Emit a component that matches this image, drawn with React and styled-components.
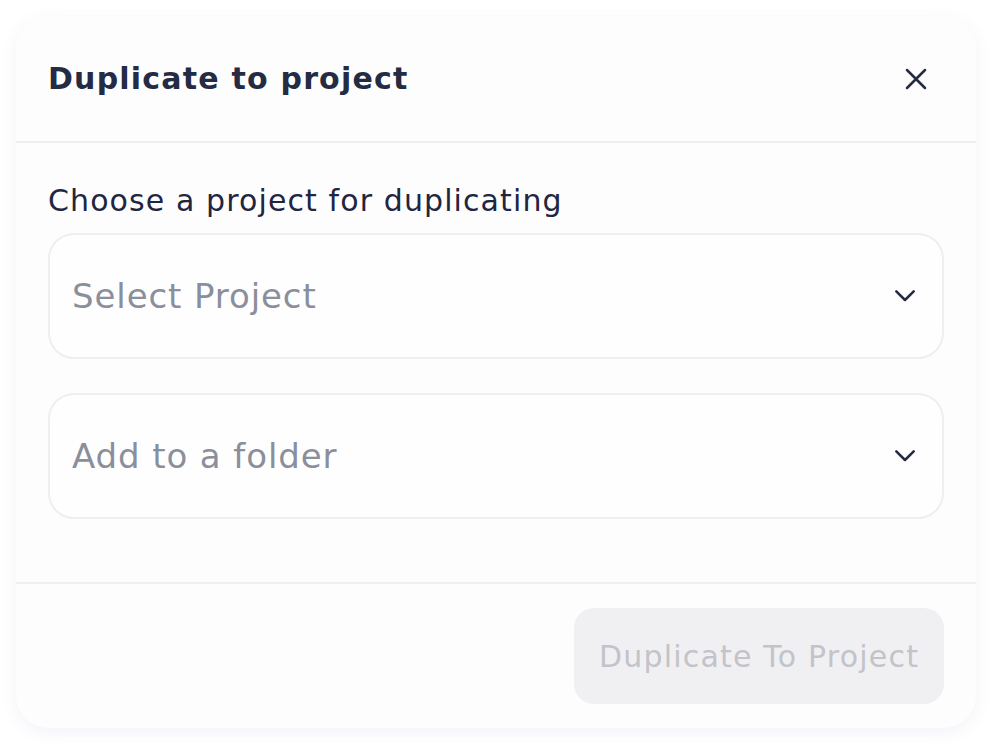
import React from 'react';
import styled, { createGlobalStyle } from 'styled-components';

const GlobalStyle = createGlobalStyle`
  html, body {
    margin: 0;
    padding: 0;
    background: #ffffff;
    font-family: "DejaVu Sans", Inter, sans-serif;
  }
  * { box-sizing: border-box; }
`;

const Page = styled.div`
  padding: 16px;
  width: 992px;
  height: 744px;
`;

const Modal = styled.div`
  width: 960px;
  height: 712px;
  background: #fdfdfe;
  border-radius: 32px;
  box-shadow: 0 4px 16px rgba(70, 80, 160, 0.07);
  display: flex;
  flex-direction: column;
`;

const Header = styled.div`
  height: 127px;
  padding: 0 48px 0 32px;
  display: flex;
  align-items: center;
  justify-content: space-between;
  border-bottom: 2px solid #efeff2;
`;

const Title = styled.h2`
  margin: 0;
  font-size: 30px;
  font-weight: 700;
  letter-spacing: 1.2px;
  color: #242b42;
`;

const CloseButton = styled.button`
  border: 0;
  background: none;
  padding: 0;
  width: 24px;
  height: 24px;
  display: flex;
  align-items: center;
  justify-content: center;
  color: #242b42;
  cursor: pointer;
`;

const Body = styled.div`
  flex: 1;
  padding: 40px 32px 0 32px;
  display: flex;
  flex-direction: column;
  border-bottom: 2px solid #efeff2;
`;

const Label = styled.div`
  font-size: 30px;
  letter-spacing: 1.1px;
  color: #1f2640;
  line-height: 36px;
  margin-bottom: 14px;
`;

const Field = styled.div`
  height: 126px;
  border: 2px solid #efeff2;
  border-radius: 26px;
  background: #fefefe;
  display: flex;
  align-items: center;
  justify-content: space-between;
  padding: 0 25px 0 22px;
  margin-bottom: ${p => p.$gap || 0}px;
`;

const Placeholder = styled.span`
  font-size: 34px;
  letter-spacing: 0.9px;
  color: #8b8f9c;
`;

const Footer = styled.div`
  height: 144px;
  padding: 24px 32px 0 32px;
  display: flex;
  justify-content: flex-end;
  align-items: flex-start;
`;

const PrimaryButton = styled.button`
  width: 370px;
  height: 96px;
  border: 0;
  border-radius: 20px;
  background: #f0f0f3;
  color: #c3c3c9;
  font-family: inherit;
  font-size: 30px;
  letter-spacing: 1.2px;
  cursor: default;
`;

const Chevron = () => (
  <svg width="24" height="24" viewBox="0 0 24 24" fill="none" stroke="#242b42" strokeWidth="2.5" strokeLinecap="round" strokeLinejoin="round">
    <path d="M3.3 7.3L12 16l8.7-8.7" />
  </svg>
);

const CloseIcon = () => (
  <svg width="24" height="24" viewBox="0 0 24 24" fill="none" stroke="#242b42" strokeWidth="2.5" strokeLinecap="round">
    <path d="M3 3l18 18M21 3L3 21" />
  </svg>
);

export default function App() {
  return (
    <Page>
      <GlobalStyle />
      <Modal>
        <Header>
          <Title>Duplicate to project</Title>
          <CloseButton aria-label="Close"><CloseIcon /></CloseButton>
        </Header>
        <Body>
          <Label>Choose a project for duplicating</Label>
          <Field $gap={34}>
            <Placeholder>Select Project</Placeholder>
            <Chevron />
          </Field>
          <Field>
            <Placeholder>Add to a folder</Placeholder>
            <Chevron />
          </Field>
        </Body>
        <Footer>
          <PrimaryButton disabled>Duplicate To Project</PrimaryButton>
        </Footer>
      </Modal>
    </Page>
  );
}
